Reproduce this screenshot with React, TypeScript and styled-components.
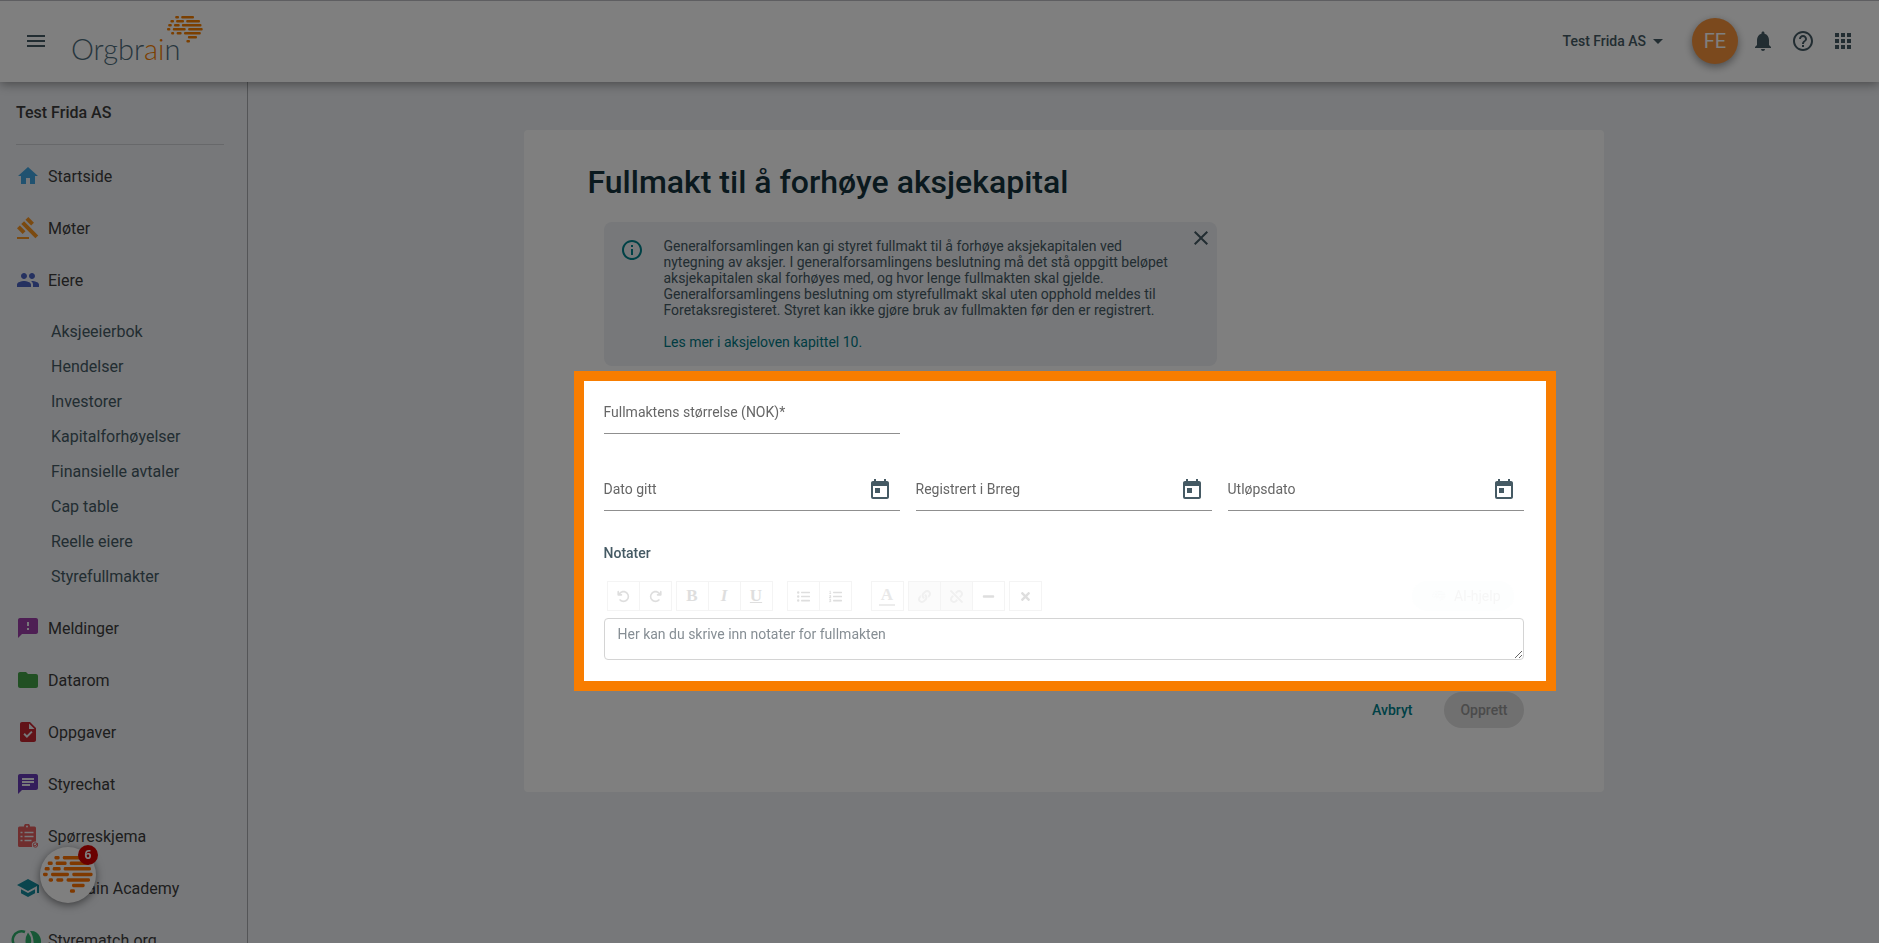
import React from 'react';
import styled, { createGlobalStyle, css } from 'styled-components';
import {
  MdMenu, MdArrowDropDown, MdNotifications, MdHelpOutline, MdApps, MdHome, MdGavel, MdPeople,
  MdFeedback, MdFolder, MdTask, MdChat, MdSchool, MdOutlineInfo, MdClose, MdToday,
} from 'react-icons/md';
import { FaListUl, FaListOl, FaLink, FaUnlink, FaMinus, FaTimes } from 'react-icons/fa';
import { FaArrowRotateLeft, FaArrowRotateRight } from 'react-icons/fa6';

const Global = createGlobalStyle`
  *, *::before, *::after { box-sizing: border-box; }
  body { margin: 0; background: #eef0f4; font-family: Roboto, "Liberation Sans", sans-serif; color: #37474f; }
  button, input, textarea { font: inherit; color: inherit; }
  button { border: 0; padding: 0; background: none; cursor: pointer; }
  a { color: inherit; text-decoration: none; }
`;

const Page = styled.div`
  height: 100vh;
  display: flex;
  flex-direction: column;
  overflow: hidden;
`;

const Header = styled.header`
  flex: none;
  height: 82px;
  display: flex;
  align-items: center;
  padding: 0 24px 2px;
  border-top: 1px solid #bdbdc2;
  background: #fff;
  box-shadow: 0 2px 10px rgba(0, 0, 0, 0.4);
  z-index: 1;
`;

const IconButton = styled.button`
  width: 24px;
  height: 24px;
  display: grid;
  place-items: center;
  color: #455a64;
  font-size: 24px;
`;

const Brand = styled.a`
  position: relative;
  display: block;
  width: 132px;
  height: 54px;
  margin-left: 23px;
  padding-top: 11px;
  font: 300 29px/48px Lato, sans-serif;
  color: #4f6d7c;
  em { font-style: normal; color: #f77f00; }
  svg { position: absolute; right: 0; top: 2px; }
`;

const HeaderTools = styled.div`
  margin-left: auto;
  display: flex;
  align-items: center;
  gap: 13px;
`;

const HeaderIcons = styled.div`
  display: flex;
  gap: 16px;
`;

const CompanyButton = styled.button`
  display: flex;
  align-items: center;
  margin-right: 9px;
  font-size: 14px;
  font-weight: 500;
  color: #455a64;
  svg { font-size: 24px; }
`;

const Avatar = styled.button`
  width: 46px;
  height: 46px;
  border-radius: 50%;
  background: #f7923a;
  color: #fff;
  font-size: 20px;
  box-shadow: 0 3px 8px rgba(0, 0, 0, 0.4);
`;

const Body = styled.div`
  flex: 1;
  min-height: 0;
  display: flex;
`;

const Sidebar = styled.nav`
  flex: none;
  width: 248px;
  border-right: 1px solid #a8abaf;
  padding: 19px 0 0 16px;
  overflow: hidden;
`;

const SideTitle = styled.h2`
  margin: 0 23px 5px 0;
  padding-bottom: 19px;
  border-bottom: 1px solid #cfd1d4;
  font-size: 16px;
  line-height: 24px;
  font-weight: 500;
  color: #3c3c3c;
`;

const NavLink = styled.a`
  height: 52px;
  display: flex;
  align-items: center;
  gap: 8px;
  font-size: 16px;
  color: #3c3c3c;
`;

const NavIcon = styled.span<{ $color: string }>`
  width: 24px;
  height: 24px;
  color: ${p => p.$color};
  font-size: 24px;
  svg { display: block; }
`;

const SubNav = styled.div`
  padding: 8px 0 8px 35px;
`;

const SubLink = styled.a`
  display: block;
  font-size: 16px;
  line-height: 35px;
  color: #455a64;
`;

const Main = styled.main`
  flex: 1;
  min-width: 0;
  padding: 48px 24px;
`;

const Card = styled.section`
  max-width: 1080px;
  margin: 0 auto;
  padding: 32px 64px 64px;
  border-radius: 4px;
  background: #fff;
`;

const Title = styled.h1`
  margin: 0 0 20px;
  font-size: 32px;
  line-height: 40px;
  font-weight: 500;
  color: #14323c;
`;

const Form = styled.form`
  padding: 0 16px;
`;

const Info = styled.aside`
  width: 613px;
  max-width: 100%;
  display: flex;
  align-items: flex-start;
  padding: 16px 4px 14px 16px;
  border-radius: 8px;
  background: #eef0f4;
  font-size: 14px;
  line-height: 16px;
  color: #455a64;
`;

const InfoIcon = styled.span`
  width: 44px;
  color: #00828c;
  font-size: 24px;
  svg { display: block; }
`;

const InfoText = styled.div`
  flex: 1;
  padding-right: 16px;
  p { margin: 0 0 16px; }
  a { display: inline-block; margin-bottom: 2px; color: #007984; }
`;

const CloseButton = styled(IconButton)`
  margin-top: -12px;
`;

const Highlight = styled.div`
  position: relative;
  z-index: 2;
  margin: 5px -32px 0 -30px;
  padding: 12px 22px 21px 20px;
  border: 10px solid #f87d00;
  background: #fff;
  box-shadow: 0 0 0 200vmax rgba(0, 0, 0, 0.5);
`;

const Fields = styled.div`
  display: grid;
  grid-template-columns: repeat(3, 1fr);
  gap: 36px 16px;
`;

const Field = styled.div<{ $wide?: boolean }>`
  height: 41px;
  display: flex;
  align-items: center;
  border-bottom: 1px solid #8f8f8f;
  padding-right: 8px;
  ${p => p.$wide && css`grid-column: 1 / -1; width: calc((100% - 32px) / 3);`}
  input {
    flex: 1;
    min-width: 0;
    border: 0;
    padding: 0 0 2px;
    outline: 0;
    background: none;
    font-size: 14px;
  }
  input::placeholder { color: #666; opacity: 1; }
`;

const NotesLabel = styled.label`
  display: block;
  margin: 33px 0 19px;
  font-size: 14px;
  line-height: 18px;
  color: #455a64;
  font-weight: 500;
`;

const Toolbar = styled.div`
  display: flex;
  align-items: center;
  padding: 0 10px 0 3px;
  margin-bottom: 7px;
`;

const ToolGroup = styled.div<{ $after: number }>`
  display: flex;
  margin-right: ${p => p.$after}px;
`;

const Tool = styled.button<{ $off?: boolean }>`
  width: 33px;
  height: 30px;
  display: grid;
  place-items: center;
  border: 1px solid #f4f4f4;
  background: ${p => (p.$off ? '#fbfbfb' : '#fff')};
  color: ${p => (p.$off ? '#f0f0f0' : '#dedede')};
  font: 700 17px/20px "Liberation Serif", serif;
  svg { width: 13px; height: 13px; }
  & + & { margin-left: -1px; }
`;

const ColorLetter = styled.span`
  padding: 0 2px;
  border-bottom: 2px solid #ececec;
  line-height: 18px;
  color: #e8e8e8;
`;

const AiButton = styled.button`
  margin-left: auto;
  height: 30px;
  display: flex;
  align-items: center;
  gap: 8px;
  padding: 0 13px 0 20px;
  border-radius: 15px;
  background: #fdfefe;
  color: #f6f6f6;
  font-size: 14px;
`;

const Notes = styled.textarea`
  display: block;
  width: 100%;
  height: 42px;
  padding: 6px 13px;
  border: 1px solid #d4d4d4;
  border-radius: 4px;
  outline: 0;
  resize: vertical;
  font-size: 14px;
  line-height: 18px;
  &::placeholder { color: #868e94; opacity: 1; }
`;

const Actions = styled.div`
  display: flex;
  justify-content: flex-end;
  gap: 16px;
  margin-top: 1px;
`;

const Action = styled.button`
  height: 36px;
  padding: 0 16px;
  border-radius: 18px;
  font-size: 14px;
  font-weight: 500;
  color: #00828c;
  &:disabled { background: #e0e0e0; color: #969696; }
`;

const Launcher = styled.button`
  position: fixed;
  left: 40px;
  bottom: 40px;
  width: 56px;
  height: 56px;
  display: grid;
  place-items: center;
  border-radius: 50%;
  background: #fff;
  box-shadow: 0 2px 8px rgba(0, 0, 0, 0.5);
`;

const Count = styled.span`
  position: absolute;
  right: -2px;
  top: -2px;
  width: 20px;
  height: 20px;
  border-radius: 50%;
  background: #d40000;
  color: #fff;
  font: 700 12px/20px "Open Sans", sans-serif;
`;

const BRAIN: number[][] = [
  [8.2, 0, 3.8], [14.2, 0, 12.8],
  [3.4, 4, 3.6], [9.1, 4, 7.9], [19.2, 4, 13.8],
  [1.2, 8, 3.6], [7, 8, 5.7], [14.9, 8, 19.6],
  [0, 12, 3.4], [5.8, 12, 12.9], [21.1, 12, 14.6],
  [4.1, 16, 3.1], [9.6, 16, 5], [17, 16, 16.8],
  [20.9, 20, 9.1], [19.4, 24, 3.6],
];

function Brain({ size, color }: { size: number; color: string }) {
  return (
    <svg width={size} height={(size * 27) / 36} viewBox="0 0 36 27" fill={color} aria-hidden="true">
      {BRAIN.map(([x, y, w], i) => <rect key={i} x={x} y={y} width={w} height={2.5} rx={1} />)}
    </svg>
  );
}

function SurveyIcon() {
  return (
    <svg width="24" height="24" viewBox="0 0 24 24" fill="none">
      <path d="M3.500 2.500H8a3 3 0 0 1 6 0h4.500A1.500 1.500 0 0 1 20 4v14.500L16 23H3.500A1.500 1.500 0 0 1 2 21.500V4a1.500 1.500 0 0 1 1.500-1.500z" fill="currentColor" />
      <circle cx="11" cy="2.600" r="1" fill="#eef0f4" />
      <path d="M4.500 8.500h2M8.500 8.500h9M4.500 12.500h2M8.500 12.500h9M4.500 16.500h2M8.500 16.500h7" stroke="#eef0f4" strokeWidth="1.700" />
      <circle cx="19.400" cy="21" r="3.600" fill="#eef0f4" />
      <circle cx="19.400" cy="21" r="2.200" stroke="currentColor" strokeWidth="1" />
      <path d="M18.200 21l1 1 2.600-2.800" stroke="currentColor" strokeWidth="1" />
    </svg>
  );
}

function MatchIcon() {
  return (
    <svg width="24" height="24" viewBox="0 0 24 24" overflow="visible">
      <path d="M9 4A8.500 8.500 0 0 0 2 20" fill="none" stroke="currentColor" strokeWidth="2.500" />
      <path d="M14 3a10 10 0 0 1 8 17h-4.500q1-11-3.500-17zM12 4.500q6.500 8 0 17q-5-9 0-17z" fill="currentColor" />
    </svg>
  );
}

type Item = { label: string; color: string; icon: React.ReactNode };

const TOP: Item[] = [
  { label: 'Startside', color: '#41a5e0', icon: <MdHome /> },
  { label: 'Møter', color: '#f79420', icon: <MdGavel /> },
  { label: 'Eiere', color: '#4a62c0', icon: <MdPeople /> },
];
const SUB = ['Aksjeeierbok', 'Hendelser', 'Investorer', 'Kapitalforhøyelser', 'Finansielle avtaler', 'Cap table', 'Reelle eiere', 'Styrefullmakter'];
const BOTTOM: Item[] = [
  { label: 'Meldinger', color: '#9c3fa8', icon: <MdFeedback /> },
  { label: 'Datarom', color: '#43a047', icon: <MdFolder /> },
  { label: 'Oppgaver', color: '#c42630', icon: <MdTask /> },
  { label: 'Styrechat', color: '#673ab7', icon: <MdChat /> },
  { label: 'Spørreskjema', color: '#e05c5c', icon: <SurveyIcon /> },
  { label: 'Orgbrain Academy', color: '#148a9c', icon: <MdSchool /> },
  { label: 'Styrematch.org', color: '#2fae6c', icon: <MatchIcon /> },
];

const renderItem = (n: Item) => (
  <NavLink href="#" key={n.label}><NavIcon $color={n.color}>{n.icon}</NavIcon>{n.label}</NavLink>
);

type ToolDef = { label: string; icon: React.ReactNode; off?: boolean };
const TOOLS: { after: number; items: ToolDef[] }[] = [
  { after: 4, items: [{ label: 'Angre', icon: <FaArrowRotateLeft /> }, { label: 'Gjør om', icon: <FaArrowRotateRight /> }] },
  { after: 14, items: [{ label: 'Fet', icon: <b>B</b> }, { label: 'Kursiv', icon: <i>I</i> }, { label: 'Understreket', icon: <u>U</u> }] },
  { after: 19, items: [{ label: 'Punktliste', icon: <FaListUl /> }, { label: 'Nummerert liste', icon: <FaListOl /> }] },
  { after: 4, items: [{ label: 'Tekstfarge', icon: <ColorLetter>A</ColorLetter> }] },
  { after: 4, items: [{ label: 'Lenke', icon: <FaLink />, off: true }, { label: 'Fjern lenke', icon: <FaUnlink />, off: true }, { label: 'Linje', icon: <FaMinus /> }] },
  { after: 0, items: [{ label: 'Fjern formatering', icon: <FaTimes /> }] },
];

export default function App() {
  return (
    <Page>
      <Global />
      <Header>
        <IconButton aria-label="Meny"><MdMenu /></IconButton>
        <Brand href="#">Orgbr<em>ai</em>n<Brain size={36} color="#f77f00" /></Brand>
        <HeaderTools>
          <CompanyButton>Test Frida AS<MdArrowDropDown /></CompanyButton>
          <Avatar>FE</Avatar>
          <HeaderIcons>
            <IconButton aria-label="Varsler"><MdNotifications /></IconButton>
            <IconButton aria-label="Hjelp"><MdHelpOutline /></IconButton>
            <IconButton aria-label="Apper"><MdApps /></IconButton>
          </HeaderIcons>
        </HeaderTools>
      </Header>
      <Body>
        <Sidebar>
          <SideTitle>Test Frida AS</SideTitle>
          {TOP.map(renderItem)}
          <SubNav>{SUB.map(s => <SubLink href="#" key={s}>{s}</SubLink>)}</SubNav>
          {BOTTOM.map(renderItem)}
        </Sidebar>
        <Main>
          <Card>
            <Title>Fullmakt til å forhøye aksjekapital</Title>
            <Form>
              <Info>
                <InfoIcon><MdOutlineInfo /></InfoIcon>
                <InfoText>
                  <p>Generalforsamlingen kan gi styret fullmakt til å forhøye aksjekapitalen ved nytegning av aksjer. I generalforsamlingens beslutning må det stå oppgitt beløpet aksjekapitalen skal forhøyes med, og hvor lenge fullmakten skal gjelde. Generalforsamlingens beslutning om styrefullmakt skal uten opphold meldes til Foretaksregisteret. Styret kan ikke gjøre bruk av fullmakten før den er registrert.</p>
                  <a href="#">Les mer i aksjeloven kapittel 10.</a>
                </InfoText>
                <CloseButton type="button" aria-label="Lukk"><MdClose /></CloseButton>
              </Info>
              <Highlight>
                <Fields>
                  <Field $wide><input aria-label="Fullmaktens størrelse (NOK)" placeholder="Fullmaktens størrelse (NOK)*" /></Field>
                  {['Dato gitt', 'Registrert i Brreg', 'Utløpsdato'].map(l => (
                    <Field key={l}>
                      <input aria-label={l} placeholder={l} />
                      <IconButton type="button" aria-label={`Velg ${l}`}><MdToday /></IconButton>
                    </Field>
                  ))}
                </Fields>
                <NotesLabel htmlFor="notes">Notater</NotesLabel>
                <Toolbar>
                  {TOOLS.map((g, i) => (
                    <ToolGroup key={i} $after={g.after}>
                      {g.items.map(t => <Tool type="button" key={t.label} aria-label={t.label} $off={t.off}>{t.icon}</Tool>)}
                    </ToolGroup>
                  ))}
                  <AiButton type="button"><Brain size={14} color="#fafbfb" />AI-hjelp</AiButton>
                </Toolbar>
                <Notes id="notes" placeholder="Her kan du skrive inn notater for fullmakten" />
              </Highlight>
              <Actions>
                <Action type="button">Avbryt</Action>
                <Action type="submit" disabled>Opprett</Action>
              </Actions>
            </Form>
          </Card>
        </Main>
      </Body>
      <Launcher aria-label="Åpne chat"><Brain size={50} color="#ff7200" /><Count>6</Count></Launcher>
    </Page>
  );
}
